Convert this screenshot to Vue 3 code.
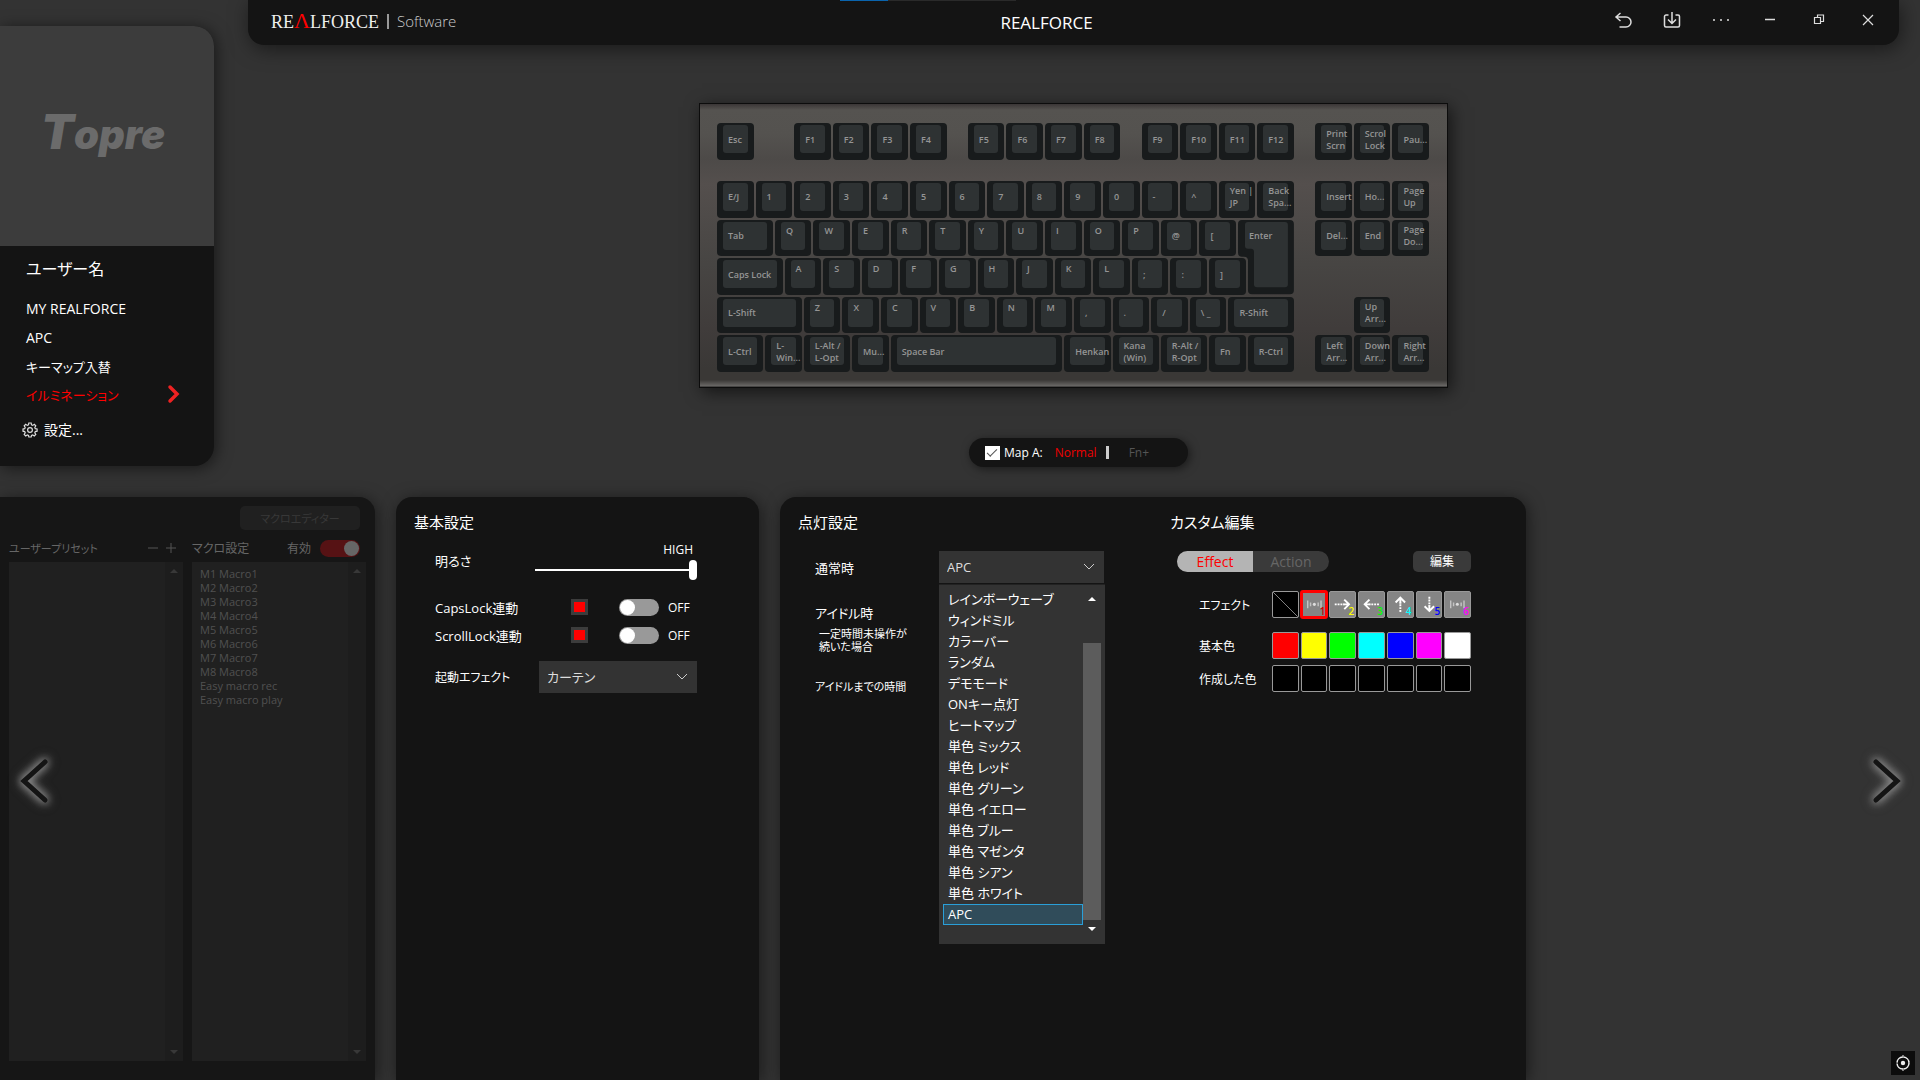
<template>
  <div class="app">
    <div class="window-strip"></div>
    <div class="top">
      <aside class="sidebar">
        <div class="avatar"><span class="topre"><span class="topre-t">T</span>opre</span></div>
        <div class="user-name">ユーザー名</div>
        <nav>
          <a
            v-for="item in menu"
            :key="item"
            href="#"
            :class="{ active: item === currentMenu, kana: !/^[A-Z ]+$/.test(item) }"
            @click.prevent="currentMenu = item"
          >
            {{ item }}
            <svg v-if="item === currentMenu" width="14" height="20" viewBox="0 0 14 20">
              <path d="M3 3 L10 10 L3 17" fill="none" stroke="#e22" stroke-width="3.5" stroke-linecap="round" />
            </svg>
          </a>
        </nav>
        <button class="settings">
          <svg width="16" height="16" viewBox="0 0 16 16" fill="none" stroke="#ddd" stroke-width="1.2">
            <path d="M6.8 1h2.4l.3 1.9 1.2.5 1.6-1.1 1.5 1.6-1 1.6.5 1.2 1.8.3v2.2l-1.8.4-.5 1.2 1 1.6-1.5 1.5-1.6-1-1.2.5L9.200 15H6.800l-.3-1.600-1.200-.5-1.600 1-1.500-1.500 1-1.600-.5-1.200L1 9.200V7l1.700-.3.5-1.200-1-1.600 1.500-1.600 1.600 1.100 1.200-.5z" />
            <circle cx="8" cy="8" r="2.400" />
          </svg>
          設定...
        </button>
      </aside>

      <main class="main">
        <header class="titlebar">
          <div class="brand">
            <span class="logo">RE<span class="lambda">Λ</span>LFORCE</span>
            <span class="bar"></span>
            <span class="software">Software</span>
          </div>
          <h1>REALFORCE</h1>
          <div class="window-buttons">
            <button aria-label="undo">
              <svg width="18" height="18" viewBox="0 0 18 18">
                <path d="M6.500 2 L2 6 L6.500 10 M2 6 H12 a5 5 0 0 1 0 10 H5.500" />
              </svg>
            </button>
            <button aria-label="import">
              <svg width="18" height="18" viewBox="0 0 18 18">
                <path d="M5.500 4 H3 a1.500 1.500 0 0 0 -1.500 1.500 V14.500 a1.500 1.500 0 0 0 1.500 1.500 H15 a1.500 1.500 0 0 0 1.500 -1.500 V5.500 A1.500 1.500 0 0 0 15 4 H12.500 M9 1 V12 M5 8.500 L9 12.500 L13 8.500" />
              </svg>
            </button>
            <button aria-label="more">
              <svg width="18" height="18" viewBox="0 0 18 18">
                <path d="M1 9h2M8 9h2M15 9h2" stroke-width="2" />
              </svg>
            </button>
            <button aria-label="minimize">
              <svg width="18" height="18" viewBox="0 0 18 18"><path d="M4 8.500h10" stroke-width="1" /></svg>
            </button>
            <button aria-label="restore">
              <svg width="18" height="18" viewBox="0 0 18 18">
                <path class="thin" d="M4.500 6.500h6v6h-6z M7.500 6.500v-2.500h6v6.500h-3" />
              </svg>
            </button>
            <button aria-label="close">
              <svg width="18" height="18" viewBox="0 0 18 18"><path class="thin" d="M4 4l10 10M14 4L4 14" /></svg>
            </button>
          </div>
        </header>

        <div class="keyboard">
          <button
            v-for="key in keys"
            :key="key.row + '-' + key.col"
            class="key"
            :class="{ letter: key.letter }"
            :style="{ gridColumn: key.col + ' / span ' + key.span, gridRow: key.row }"
          >
            <span class="cap">{{ key.label }}</span>
          </button>
          <button class="enter">
            <svg viewBox="0 0 56 76" preserveAspectRatio="none">
              <path d="M4 0H52a4 4 0 0 1 4 4V71a4 4 0 0 1 -4 4H14a4 4 0 0 1 -4 -4V41a4 4 0 0 0 -4 -4H4a4 4 0 0 1 -4 -4V4a4 4 0 0 1 4 -4z" fill="#181b1c" />
              <path d="M10 2H47a3 3 0 0 1 3 3V65a3 3 0 0 1 -3 3H19a3 3 0 0 1 -3 -3V32a3 3 0 0 0 -3 -3H10a3 3 0 0 1 -3 -3V5a3 3 0 0 1 3 -3z" fill="#2e3233" />
            </svg>
            <span>Enter</span>
          </button>
        </div>

        <div class="map-bar">
          <label><input v-model="mapA" type="checkbox" class="tick">Map A:</label>
          <button class="normal">Normal</button>
          <span class="split"></span>
          <button class="fn">Fn+</button>
        </div>
      </main>
    </div>

    <div class="panels">
      <section class="panel macro">
        <button class="macro-editor" disabled>マクロエディター</button>
        <div class="macro-columns">
          <div class="macro-column">
            <div class="macro-head">
              <span class="kana-small">ユーザープリセット</span>
              <span class="plus-minus">
                <button aria-label="remove">
                  <svg width="12" height="12" viewBox="0 0 12 12"><path d="M1 6h10" /></svg>
                </button>
                <button aria-label="add">
                  <svg width="12" height="12" viewBox="0 0 12 12"><path d="M1 6h10M6 1v10" /></svg>
                </button>
              </span>
            </div>
            <div class="list-box">
              <ul></ul>
              <div class="list-scroll"><i class="up"></i><i class="down"></i></div>
            </div>
          </div>
          <div class="macro-column">
            <div class="macro-head">
              <span>マクロ設定</span>
              <label class="enable">有効<input v-model="macroOn" type="checkbox" class="toggle" disabled></label>
            </div>
            <div class="list-box">
              <ul>
                <li v-for="macro in macros" :key="macro">{{ macro }}</li>
              </ul>
              <div class="list-scroll"><i class="up"></i><i class="down"></i></div>
            </div>
          </div>
        </div>
      </section>

      <section class="panel basic">
        <h2>基本設定</h2>
        <div class="brightness">
          <label for="brightness">明るさ</label>
          <div class="slider">
            <span>HIGH</span>
            <input id="brightness" v-model="brightness" type="range" min="0" max="10">
          </div>
        </div>
        <div v-for="lock in locks" :key="lock.id" class="lock">
          <label :for="lock.id">{{ lock.label }}</label>
          <button class="lock-color" :aria-label="lock.label"></button>
          <input :id="lock.id" v-model="lock.on" type="checkbox" class="toggle">
          <span>{{ lock.on ? 'ON' : 'OFF' }}</span>
        </div>
        <div class="startup">
          <label for="startup">起動エフェクト</label>
          <div class="select">
            <select id="startup"><option>カーテン</option></select>
            <svg width="12" height="8" viewBox="0 0 12 8"><path d="M1 1l5 5 5-5" /></svg>
          </div>
        </div>
      </section>

      <section class="panel lighting">
        <div class="light">
          <h2>点灯設定</h2>
          <div class="field">
            <label for="normal-effect">通常時</label>
            <div class="select">
              <select id="normal-effect"><option>{{ effect }}</option></select>
              <svg width="12" height="8" viewBox="0 0 12 8"><path d="M1 1l5 5 5-5" /></svg>
              <div class="dropdown">
                <ul role="listbox">
                  <li
                    v-for="name in effects"
                    :key="name"
                    role="option"
                    :class="{ selected: name === effect }"
                    @click="effect = name"
                  >{{ name }}</li>
                </ul>
                <div class="drop-scroll"><i class="up"></i><div class="thumb"></div><i class="down"></i></div>
              </div>
            </div>
          </div>
          <div class="field idle">
            <label for="idle-effect">アイドル時<small>一定時間未操作が<br>続いた場合</small></label>
            <div class="select back"><select id="idle-effect"></select></div>
          </div>
          <div class="idle-time">アイドルまでの時間</div>
        </div>

        <div class="custom">
          <h2>カスタム編集</h2>
          <div class="custom-top">
            <div class="segment">
              <button class="on">Effect</button>
              <button>Action</button>
            </div>
            <button class="edit">編集</button>
          </div>
          <div class="swatch-row">
            <span>エフェクト</span>
            <div class="swatches">
              <button
                v-for="tile in tiles"
                :key="tile.icon + tile.num"
                class="tile"
                :class="{ none: tile.icon === 'none', picked: tile.num === '1' }"
              >
                <svg viewBox="0 0 26 26">
                  <path v-if="tile.icon === 'none'" d="M0 0L26 26" stroke="#888" stroke-width="1" />
                  <template v-else-if="tile.icon === 'wave'">
                    <path d="M6 9v8M20 9v8M9 11v4M17 11v4" stroke="#c4c4c4" stroke-width="1.500" />
                    <circle cx="13" cy="13" r="1.600" fill="#ddd" />
                  </template>
                  <g v-else :transform="'rotate(' + tile.turn + ' 13 13)'" fill="none" stroke="#fff" stroke-width="2">
                    <path d="M5 13h10" stroke-dasharray="2 1" />
                    <path d="M14 13h6M15 8l5 5-5 5" />
                  </g>
                </svg>
                <span class="num" :class="'n' + tile.num">{{ tile.num }}</span>
              </button>
            </div>
          </div>
          <div class="swatch-row base">
            <span>基本色</span>
            <div class="swatches">
              <button v-for="c in colors" :key="c" class="tile" :style="{ background: c }" :aria-label="c"></button>
            </div>
          </div>
          <div class="swatch-row made">
            <span>作成した色</span>
            <div class="swatches">
              <button v-for="n in 7" :key="n" class="tile none" :aria-label="'color ' + n"></button>
            </div>
          </div>
        </div>
      </section>

      <button class="arrow prev" aria-label="previous">
        <svg width="60" height="76" viewBox="0 0 60 76"><path d="M43 19L22 38L43 57" /></svg>
      </button>
      <button class="arrow next" aria-label="next">
        <svg width="60" height="76" viewBox="0 0 60 76"><path d="M17 19L38 38L17 57" /></svg>
      </button>
      <button class="target" aria-label="target">
        <svg width="16" height="16" viewBox="0 0 16 16" fill="none" stroke="#eee">
          <circle cx="8" cy="8" r="6" stroke-width="1.500" stroke-dasharray="8.400 1" />
          <circle cx="8" cy="8" r="2.200" fill="#eee" stroke="none" />
          <path d="M8 0v3M8 13v3" />
        </svg>
      </button>
    </div>
  </div>
</template>

<script setup>
import { ref } from 'vue'

const menu = ['MY REALFORCE', 'APC', 'キーマップ入替', 'イルミネーション']
const currentMenu = ref('イルミネーション')
const mapA = ref(true)
const macroOn = ref(true)
const brightness = ref(10)
const effect = ref('APC')

const macros = [
  ...[1, 2, 3, 4, 5, 6, 7, 8].map(n => `M${n} Macro${n}`),
  'Easy macro rec',
  'Easy macro play'
]

const locks = ref([
  { id: 'caps', label: 'CapsLock連動', on: false },
  { id: 'scroll', label: 'ScrollLock連動', on: false }
])

const effects = [
  'レインボーウェーブ', 'ウィンドミル', 'カラーバー', 'ランダム', 'デモモード', 'ONキー点灯',
  'ヒートマップ', '単色 ミックス', '単色 レッド', '単色 グリーン', '単色 イエロー', '単色 ブルー',
  '単色 マゼンタ', '単色 シアン', '単色 ホワイト', 'APC'
]

const tiles = [
  { icon: 'none', num: '' },
  { icon: 'wave', num: '1' },
  { icon: 'arrow', num: '2', turn: 0 },
  { icon: 'arrow', num: '3', turn: 180 },
  { icon: 'arrow', num: '4', turn: -90 },
  { icon: 'arrow', num: '5', turn: 90 },
  { icon: 'wave', num: '6' }
]

const colors = ['#ff0000', '#ffff00', '#00ff00', '#00ffff', '#0000ff', '#ff00ff', '#ffffff']

// Key columns are quarter units: a normal key spans 4.
// A number is a gap, [label, span] is a wide key.
const layout = [
  [1, ['Esc', 4], 4, 'F1', 'F2', 'F3', 'F4', 2, 'F5', 'F6', 'F7', 'F8', 2, 'F9', 'F10', 'F11', 'F12', 2, 'Print\nScrn', 'Scrol\nLock', 'Pau...'],
  [3, 'E/J', '1', '2', '3', '4', '5', '6', '7', '8', '9', '0', '-', '^', 'Yen |\nJP', 'Back\nSpa...', 2, 'Insert', 'Ho...', 'Page\nUp'],
  [4, ['Tab', 6], ...'QWERTYUIOP', '@', '[', 8, 'Del...', 'End', 'Page\nDo...'],
  [5, ['Caps Lock', 7], ...'ASDFGHJKL', ';', ':', ']'],
  [6, ['L-Shift', 9], ...'ZXCVBNM', ',', '.', '/', '\\ _', ['R-Shift', 7], 6, 'Up\nArr...'],
  [7, ['L-Ctrl', 5], 'L-\nWin...', ['L-Alt /\nL-Opt', 5], 'Mu...', ['Space Bar', 18], ['Henkan', 5], ['Kana\n(Win)', 5], ['R-Alt /\nR-Opt', 5], 'Fn', ['R-Ctrl', 5], 2, 'Left\nArr...', 'Down\nArr...', 'Right\nArr...']
]

const keys = []
for (const [row, ...items] of layout) {
  let col = 1
  for (const item of items) {
    if (typeof item === 'number') {
      col += item
      continue
    }
    const [label, span] = Array.isArray(item) ? item : [item, 4]
    keys.push({ row, col, span, label, letter: /^[A-Z]$/.test(label) })
    col += span
  }
}
</script>

<style>
body {
  background: #333;
}
</style>

<style scoped>
.app {
  position: relative;
  display: flex;
  flex-direction: column;
  min-height: 100vh;
  overflow: hidden;
  background: #333;
  color: #fff;
  font-family: "Open Sans", "Noto Sans CJK JP", sans-serif;
  font-size: 13px;
  font-feature-settings: "palt";
}

button,
input,
select {
  margin: 0;
  padding: 0;
  border: 0;
  background: none;
  color: inherit;
  font: inherit;
  font-feature-settings: inherit;
}

input,
select {
  appearance: none;
}

svg {
  display: block;
}

h1,
h2,
ul {
  margin: 0;
  padding: 0;
  font-weight: 400;
  list-style: none;
}

h2 {
  font-size: 15px;
  line-height: 24px;
}

.window-strip {
  position: absolute;
  z-index: 2;
  top: 0;
  left: 840px;
  width: 176px;
  height: 1px;
  background: linear-gradient(90deg, #0a64ad 48px, #2a2a2a 48px);
}

.top {
  display: flex;
  align-items: flex-start;
}

/* sidebar */
.sidebar {
  width: 214px;
  height: 440px;
  margin-top: 26px;
  overflow: hidden;
  border-radius: 0 20px 20px 0;
  background: #141414;
  box-shadow: 2px 2px 16px rgba(0, 0, 0, 0.55);
}

.avatar {
  display: flex;
  align-items: center;
  justify-content: center;
  box-sizing: border-box;
  height: 220px;
  padding: 0 8px 6px 0;
  background: #3c3c3c;
}

.topre {
  color: #6b6b6b;
  font-family: Inter, sans-serif;
  font-size: 40px;
  font-style: italic;
  font-weight: 900;
  line-height: 48px;
}

.topre-t {
  font-size: 48px;
}

.user-name {
  margin-top: 8px;
  padding-left: 26px;
  font-size: 16px;
  line-height: 30px;
}

nav {
  margin-top: 10px;
}

nav a {
  display: flex;
  align-items: center;
  justify-content: space-between;
  height: 29px;
  padding: 0 33px 0 26px;
  color: #fff;
  font-size: 14px;
  text-decoration: none;
}

nav a.kana {
  height: 28px;
  font-size: 13px;
}

nav a.active {
  color: #f00;
}

.settings {
  display: flex;
  align-items: center;
  gap: 6px;
  margin: 10px 0 0 22px;
  font-size: 14px;
  line-height: 24px;
}

/* title bar */
.main {
  flex: 1;
  display: flex;
  flex-direction: column;
  align-items: center;
  padding: 0 21px 30px 34px;
}

.titlebar {
  display: grid;
  grid-template-columns: 1fr auto 1fr;
  align-items: center;
  align-self: stretch;
  height: 45px;
  padding: 0 7px 0 23px;
  border-radius: 0 0 16px 16px;
  background: #141414;
  box-shadow: 2px 4px 20px rgba(0, 0, 0, 0.5);
}

.brand {
  display: flex;
  align-items: center;
  height: 42px;
  margin-bottom: 3px;
}

.logo {
  color: #eee;
  font-family: "Liberation Serif", serif;
  font-size: 18px;
  line-height: 24px;
}

.lambda {
  color: #f00;
  font-size: 22px;
}

.bar {
  width: 2px;
  height: 15px;
  margin: 0 8px;
  background: #999;
}

.software {
  color: #ccc;
  font-size: 15px;
  font-weight: 300;
}

h1 {
  padding-right: 70px;
  font-size: 17px;
}

.window-buttons {
  display: flex;
  align-self: start;
  justify-content: flex-end;
  height: 40px;
}

.window-buttons button {
  display: flex;
  align-items: center;
  justify-content: center;
  width: 49px;
}

.window-buttons path {
  fill: none;
  stroke: #ddd;
  stroke-width: 1.5;
}

.window-buttons path.thin {
  stroke-width: 1.2;
}

/* keyboard */
.keyboard {
  display: grid;
  grid-template-columns: repeat(74, 1fr);
  grid-template-rows: 2fr 1fr 2fr 2fr 2fr 2fr 2fr;
  box-sizing: border-box;
  width: 749px;
  height: 285px;
  margin-top: 58px;
  padding: 19px 16px 13px 17px;
  border: 1px solid #0c0c0c;
  background: linear-gradient(#3a3636 0, #555350 6px, #54524f 30px, #4d4a48 55px, #544f4d 80px, #474543 160px, #403c3b 225px, #3a3836 265px, #3a3836 276px, #6a6866 282px, #222 283px);
  box-shadow: 3px 4px 16px rgba(0, 0, 0, 0.6);
}

.key {
  display: flex;
  min-width: 0;
  min-height: 0;
  margin: 0 2px 2px 0;
  padding: 2px 6px 7px;
  border-radius: 4px;
  background: #181b1c;
  color: #959595;
  font-size: 9px;
  font-weight: 600;
  line-height: 12px;
  text-align: left;
}

.cap {
  display: flex;
  flex: 1;
  align-items: center;
  box-sizing: border-box;
  min-width: 0;
  height: 28px;
  padding: 1px 0 0 5px;
  border-radius: 3px;
  background: #2e3233;
  white-space: pre;
}

.letter .cap {
  align-items: flex-start;
  padding-top: 3px;
}

.enter {
  position: relative;
  grid-column: 55 / span 6;
  grid-row: 4 / span 2;
  min-height: 0;
  margin: 0 2px 2px 0;
  color: #959595;
  font-size: 9px;
  font-weight: 600;
  line-height: 12px;
}

.enter svg {
  width: 100%;
  height: 100%;
}

.enter span {
  position: absolute;
  top: 10px;
  left: 11px;
}

.map-bar {
  display: flex;
  align-items: center;
  box-sizing: border-box;
  width: 219px;
  height: 29px;
  margin: 50px 0 0 10px;
  padding-left: 16px;
  border-radius: 15px;
  background: #141414;
  box-shadow: 2px 2px 10px rgba(0, 0, 0, 0.5);
  font-size: 12px;
}

.map-bar label {
  display: flex;
  align-items: center;
  gap: 4px;
}

.tick {
  width: 15px;
  height: 14px;
  background: #fff;
}

.tick:checked::before {
  content: "";
  display: block;
  width: 9px;
  height: 4px;
  margin: 3px 0 0 2px;
  border-bottom: 1px solid #555;
  border-left: 1px solid #555;
  transform: rotate(-45deg);
}

.normal {
  margin-left: 12px;
  color: #e00;
}

.split {
  width: 3px;
  height: 13px;
  margin: 0 20px 0 9px;
  background: #ccc;
}

.fn {
  color: #555;
}

/* panels */
.panels {
  position: relative;
  flex: 1;
  display: grid;
  grid-template-columns: 375fr 363fr 746fr 373fr;
  gap: 21px;
}

.panel {
  min-width: 0;
  border-radius: 16px 16px 0 0;
  background: #141414;
  box-shadow: 2px 2px 16px rgba(0, 0, 0, 0.5);
}

.macro {
  display: flex;
  flex-direction: column;
  padding: 9px 9px 19px;
  border-radius: 0 16px 0 0;
  background: #161616;
  color: #666;
  font-size: 12px;
}

.macro-editor {
  align-self: flex-end;
  width: 120px;
  height: 24px;
  margin-right: 6px;
  border-radius: 5px;
  background: #202020;
  color: #383838;
  font-size: 11px;
}

.kana-small {
  font-size: 11px;
}

.macro-columns {
  flex: 1;
  display: grid;
  grid-template-columns: 1fr 1fr;
  gap: 9px;
}

.macro-column {
  display: flex;
  flex-direction: column;
}

.macro-head {
  display: flex;
  align-items: center;
  justify-content: space-between;
  height: 24px;
  padding: 6px 0 2px;
}

.plus-minus {
  display: flex;
  gap: 6px;
  padding-right: 6px;
}

.plus-minus path {
  stroke: #555;
}

.enable {
  display: flex;
  align-items: center;
  gap: 9px;
  padding-right: 6px;
}

.toggle {
  display: flex;
  box-sizing: border-box;
  width: 40px;
  height: 17px;
  padding: 1px;
  border-radius: 9px;
  background: #999;
}

.toggle::before {
  content: "";
  width: 15px;
  height: 15px;
  border-radius: 50%;
  background: #fff;
}

.toggle:checked {
  justify-content: flex-end;
  background: #c00;
}

.macro .toggle {
  background: #561214;
}

.macro .toggle::before {
  background: #666;
}

.list-box {
  flex: 1;
  display: flex;
  background: #202020;
}

.list-box ul {
  flex: 1;
  padding: 5px 8px;
  color: #505050;
  font-size: 11px;
  line-height: 14px;
}

.list-scroll {
  display: flex;
  flex-direction: column;
  align-items: center;
  justify-content: space-between;
  width: 18px;
  padding: 7px 0;
  background: #1d1d1d;
}

.up,
.down {
  width: 0;
  height: 0;
  border: 4px solid transparent;
}

.up {
  border-top: 0;
  border-bottom-color: #383838;
}

.down {
  border-bottom: 0;
  border-top-color: #383838;
}

.basic {
  padding: 13px 62px 0 18px;
}

.brightness,
.startup {
  display: flex;
  align-items: center;
  justify-content: space-between;
  padding-left: 21px;
}

.brightness {
  height: 40px;
  margin-top: 6px;
}

.slider {
  display: flex;
  flex-direction: column;
  width: 162px;
  font-size: 12px;
  line-height: 20px;
}

.slider span {
  padding-right: 4px;
  text-align: right;
}

.slider input {
  width: 100%;
  height: 20px;
}

.slider input::-webkit-slider-runnable-track {
  height: 20px;
  background: linear-gradient(transparent 9px, #fff 9px, #fff 11px, transparent 11px);
}

.slider input::-webkit-slider-thumb {
  appearance: none;
  width: 8px;
  height: 20px;
  border-radius: 4px;
  background: #fff;
}

.lock {
  display: grid;
  grid-template-columns: 1fr 48px 49px 29px;
  align-items: center;
  height: 28px;
  padding-left: 21px;
}

.brightness + .lock {
  margin-top: 13px;
}

.lock span {
  font-size: 12px;
}

.lock-color {
  width: 17px;
  height: 16px;
  border: 3px solid #3c3c3c;
  background: #f00;
}

.startup {
  margin-top: 12px;
}

.startup label {
  font-size: 12px;
}

.select {
  position: relative;
  display: flex;
  align-items: center;
  justify-content: flex-end;
  width: 165px;
  height: 32px;
  background: #333;
}

.startup .select {
  width: 158px;
}

.select select {
  flex: 1;
  height: 32px;
  padding-left: 8px;
  color: #ddd;
}

.select > svg {
  margin-right: 9px;
}

.select path {
  fill: none;
  stroke: #ccc;
}

.lighting {
  display: grid;
  grid-template-columns: 1fr 1fr;
  gap: 16px;
  padding: 13px 0 0 18px;
}

.field {
  display: grid;
  grid-template-columns: 124px 165px;
  align-items: center;
  margin-top: 17px;
  padding-left: 17px;
}

.idle {
  align-items: start;
  margin-top: 21px;
  line-height: 18px;
}

.idle small {
  display: block;
  padding: 5px 0 0 4px;
  font-size: 11px;
  line-height: 13px;
}

.back {
  background: #222;
}

.idle-time {
  margin-top: 25px;
  padding-left: 17px;
  font-size: 11px;
  line-height: 18px;
}

.dropdown {
  position: absolute;
  z-index: 1;
  top: 33px;
  left: 0;
  display: flex;
  box-sizing: border-box;
  width: 166px;
  padding: 4px 4px 19px;
  border-top: 1px solid #222;
  background: #333;
}

.dropdown ul {
  flex: 1;
}

.dropdown li {
  box-sizing: border-box;
  height: 21px;
  padding-left: 5px;
  line-height: 21px;
}

.dropdown li.selected {
  padding-left: 4px;
  border: 1px solid #2a9fd8;
  background: #304c5a;
  line-height: 19px;
}

.drop-scroll {
  display: flex;
  flex-direction: column;
  align-items: center;
  width: 18px;
  margin-bottom: -6px;
  padding: 8px 0 0;
}

.drop-scroll .up {
  border-bottom-color: #fff;
}

.drop-scroll .down {
  border-top-color: #fff;
}

.thumb {
  flex: 1;
  align-self: stretch;
  margin: 42px 0 7px;
  background: #5c5c5c;
}

.custom-top {
  display: flex;
  align-items: center;
  justify-content: space-between;
  margin: 17px 55px 0 7px;
}

.segment {
  display: grid;
  grid-template-columns: 1fr 1fr;
  width: 152px;
  height: 21px;
  overflow: hidden;
  border-radius: 11px;
  background: #3a3a3a;
  color: #666;
  font-size: 14px;
  line-height: 20px;
}

.segment .on {
  background: #b4b4b4;
  color: #f00;
}

.edit {
  width: 58px;
  height: 21px;
  border-radius: 5px;
  background: #3a3a3a;
  font-size: 12px;
  line-height: 20px;
}

.swatch-row {
  display: flex;
  align-items: center;
  justify-content: space-between;
  margin: 19px 55px 0 29px;
  font-size: 12px;
}

.base {
  margin-top: 14px;
}

.made {
  margin-top: 6px;
}

.swatches {
  display: grid;
  grid-template-columns: repeat(7, 1fr);
  gap: 2px;
  width: 199px;
}

.tile {
  position: relative;
  height: 27px;
  border: 1px solid #999;
  border-radius: 2px;
  background: #858585;
}

.tile.none {
  background: #000;
}

.tile.picked {
  border-color: #333;
  outline: 3px solid #f00;
  outline-offset: -2px;
}

.num {
  position: absolute;
  right: 1px;
  bottom: 0;
  font-size: 10px;
  font-weight: 600;
  line-height: 12px;
}

.n1 { color: #c00; }
.n2 { color: #ff0; }
.n3 { color: #0f0; }
.n4 { color: #0ff; }
.n5 { color: #00f; }
.n6 { color: #f0f; }

.arrow {
  position: absolute;
  top: 246px;
}

.prev {
  left: 2px;
}

.next {
  right: 1px;
}

.arrow path {
  fill: none;
  stroke: #141414;
  stroke-width: 5;
  stroke-linecap: round;
}

.arrow svg {
  filter: drop-shadow(0 0 4px #999) drop-shadow(0 0 4px #777);
}

.target {
  position: absolute;
  right: 5px;
  bottom: 5px;
  padding: 4px;
  background: #0c0c0c;
}
</style>
